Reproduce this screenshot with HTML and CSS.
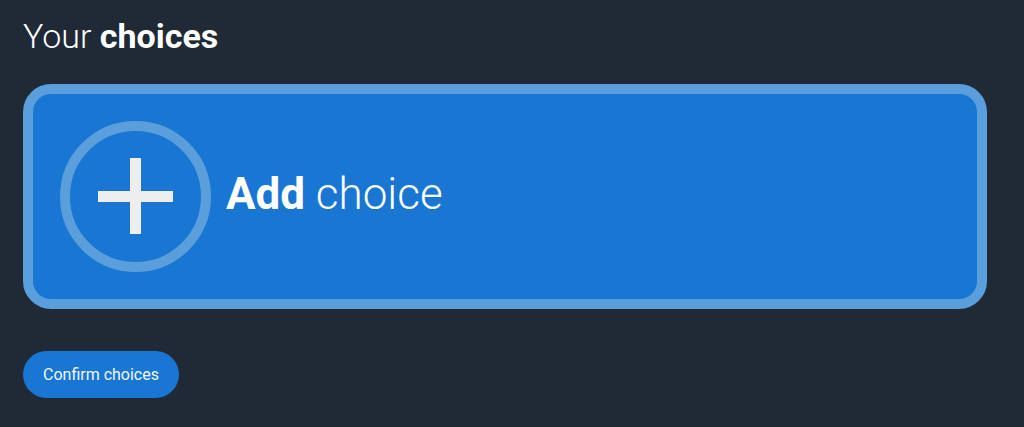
FILE: index.html
```html
<!DOCTYPE html>
<html lang="en">
<head>
    <meta charset="UTF-8">
    <meta name="viewport" content="width=device-width, initial-scale=1.0">
    <title>Your choices</title>
    <link rel="stylesheet" href="styles.css">
</head>
<body>

    <h1 class="title">Your <strong>choices</strong></h1>

    <button class="add-card" type="button">
        <span class="add-icon">
            <svg width="151" height="151" viewBox="0 0 151 151">
                <circle cx="75.5" cy="75.5" r="70.5" fill="none" stroke="#5b9edc" stroke-width="10"/>
                <rect x="38" y="70" width="75" height="11" fill="#eeeeee"/>
                <rect x="70" y="37" width="11" height="76" fill="#eeeeee"/>
            </svg>
        </span>
        <span class="add-label"><strong>Add</strong> choice</span>
    </button>

    <button class="confirm" type="button">Confirm choices</button>

</body>
</html>
```

FILE: styles.css
```css
body { margin: 0; padding: 16px 23px; background-color: #202a36; color: #fff; font-family: Roboto, "Liberation Sans", sans-serif; }
.title { margin: 0; font-size: 34px; line-height: 40px; font-weight: 300; }
.title strong { font-weight: 700; }
.add-card { display: flex; align-items: center; gap: 15px; box-sizing: border-box; width: 964px; height: 225px; margin-top: 28px; padding: 0 27px; background-color: #1976d2; border: 10px solid #5b9edc; border-radius: 28px; color: #fff; font-family: inherit; cursor: pointer; text-align: left; }
.add-icon { display: flex; }
.add-label { margin-bottom: 6px; font-size: 44px; font-weight: 300; white-space: nowrap; }
.add-label strong { font-weight: 700; }
.confirm { display: block; margin-top: 42px; height: 47px; padding: 0 20px; background-color: #1976d2; border: none; border-radius: 24px; color: #f2f6fb; font-family: inherit; font-size: 16px; cursor: pointer; }
```
